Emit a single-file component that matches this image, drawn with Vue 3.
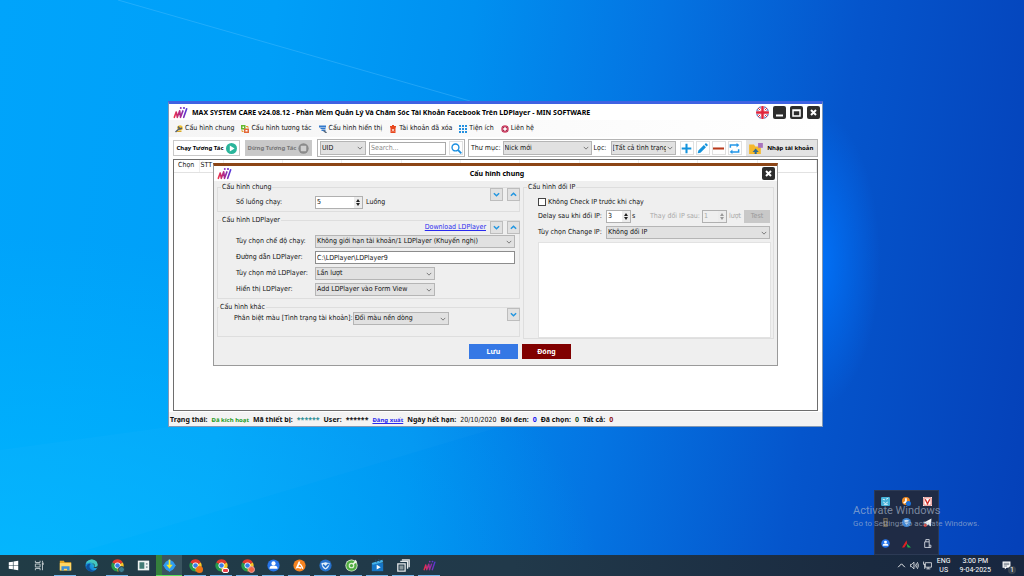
<script setup>
import { ref } from 'vue'

const menu = [
  { icon: 'wrench', text: 'Cấu hình chung' },
  { icon: 'swap', text: 'Cấu hình tương tác' },
  { icon: 'display', text: 'Cấu hình hiển thị' },
  { icon: 'trash', text: 'Tài khoản đã xóa' },
  { icon: 'grid', text: 'Tiện ích' },
  { icon: 'help', text: 'Liên hệ' }
]

const tools = [
  { icon: 'plus', label: 'Thêm' },
  { icon: 'pencil', label: 'Sửa' },
  { icon: 'minus', label: 'Xóa' },
  { icon: 'refresh', label: 'Tải lại' }
]

const apps = [
  { icon: 'windows', label: 'Start' },
  { icon: 'taskview', label: 'Task View' },
  { icon: 'folder', label: 'File Explorer', open: true },
  { icon: 'edge', label: 'Edge' },
  { icon: 'chrome', label: 'Chrome', open: true, badge: 'teal' },
  { icon: 'panel', label: 'Panel' },
  { icon: 'download', label: 'Downloader', open: true, busy: true },
  { icon: 'chrome', label: 'Chrome 2', open: true, badge: 'orange' },
  { icon: 'chrome', label: 'Chrome 3', open: true, badge: 'white' },
  { icon: 'chrome', label: 'Chrome 4', open: true, badge: 'red' },
  { icon: 'person', label: 'Contacts', open: true },
  { icon: 'rocket', label: 'Launcher', open: true },
  { icon: 'shield', label: 'Shield', open: true },
  { icon: 'coccoc', label: 'Browser', open: true },
  { icon: 'movies', label: 'Player', open: true },
  { icon: 'stack', label: 'Windows', open: true },
  { icon: 'logo', label: 'MIN', open: true }
]

const tray = ['t-face', 't-orange', 't-v', 't-dark', 't-shield', 't-send', 'person', 't-tri', 't-usb']

const keyword = ref('')
const threads = ref('5')
const path = ref('C:\\LDPlayer\\LDPlayer9')
const delay = ref('3')
const change = ref('1')
const skipCheck = ref(false)
const ipList = ref('')
</script>

<template>
  <main class="desktop">
    <svg class="defs" aria-hidden="true">
      <defs>
        <linearGradient id="min" gradientUnits="userSpaceOnUse" x1="2" y1="0" x2="26" y2="0">
          <stop offset="0" stop-color="#ee3048" /><stop offset=".5" stop-color="#a82a94" /><stop offset="1" stop-color="#5236dc" />
        </linearGradient>
        <linearGradient id="edgeg" x1="0" y1="1" x2="1" y2="0">
          <stop offset="0" stop-color="#0d5cb8" /><stop offset=".5" stop-color="#1b9de2" /><stop offset="1" stop-color="#55d66a" />
        </linearGradient>
      </defs>
      <symbol id="logo" viewBox="0 0 28 24">
        <path d="M2.500 21L6 11M8 21L12.500 9M14 21L18.500 9M20 21L25.500 5M6 11L8 20M12.500 9L14 20" fill="none" stroke="url(#min)" stroke-width="3" stroke-linecap="round" />
        <circle cx="14.500" cy="3.500" r="1.800" fill="#8e2fb8" /><circle cx="20.500" cy="3.500" r="2" fill="#6b34cc" />
      </symbol>
      <symbol id="wrench" viewBox="0 0 16 16"><circle cx="10" cy="6" r="5.500" fill="#f0c330" /><path d="M1 14L9 7M6 3L10 8L14 6" stroke="#55606c" stroke-width="3" fill="none" /><path d="M4 13h9" stroke="#d8a92c" stroke-width="2" /></symbol>
      <symbol id="swap" viewBox="0 0 16 16"><path d="M0 0h9v9H0z" fill="#63b82e" /><path d="M3 3h3v3H3z" fill="#fff" /><path d="M6 7h10v9H6z" fill="#e2683a" /><path d="M9 10h4v3H9z" fill="#fff" /><path d="M10 3h4v3M2 10v3h3" stroke="#e8a02c" stroke-width="2" fill="none" /></symbol>
      <symbol id="display" viewBox="0 0 16 16"><path d="M0 1h14v4H0zM3 6h10v2H3zM5 9h8v3H5z" fill="#3279cc" /><path d="M9 11l6 5" stroke="#58697c" stroke-width="3" /></symbol>
      <symbol id="trash" viewBox="0 0 16 16"><path d="M2 2h4V0h4v2h4v3H2zM3 4h10v12H3z" fill="#e8471e" /><path d="M6 8l4 5M10 8l-4 5" stroke="#fff" stroke-width="1.500" /></symbol>
      <symbol id="grid" viewBox="0 0 16 16"><path d="M0 0h4v4H0zM6 0h4v4H6zM12 0h4v4h-4zM0 6h4v4H0zM6 6h4v4H6zM12 6h4v4h-4zM0 12h4v4H0zM6 12h4v4H6zM12 12h4v4h-4z" fill="#2590df" /></symbol>
      <symbol id="help" viewBox="0 0 16 16"><circle cx="8" cy="8" r="5.500" fill="none" stroke="#d14668" stroke-width="4" /><path d="M3 3l3 3M13 3l-3 3M3 13l3-3M13 13l-3-3" stroke="#8d3150" stroke-width="2" /></symbol>
      <symbol id="play" viewBox="0 0 16 16"><circle cx="8" cy="8" r="8" fill="#2bb59b" /><path d="M5.500 3.500v9l7-4.500z" fill="#fff" /></symbol>
      <symbol id="stop" viewBox="0 0 16 16"><circle cx="8" cy="8" r="7.500" fill="#8b8b8b" /><rect x="4" y="4" width="8" height="8" rx="1" fill="#cfcfcf" /></symbol>
      <symbol id="search" viewBox="0 0 16 16"><circle cx="6.500" cy="6.500" r="5" fill="none" stroke="#1b8fe0" stroke-width="2" /><path d="M10 10l5 5" stroke="#1b8fe0" stroke-width="2.600" /></symbol>
      <symbol id="plus" viewBox="0 0 16 16"><path d="M8 1v14M1 8h14" stroke="#1493dc" stroke-width="3" /></symbol>
      <symbol id="minus" viewBox="0 0 16 16"><path d="M0 8h16" stroke="#b93a1c" stroke-width="3" /></symbol>
      <symbol id="pencil" viewBox="0 0 16 16"><path d="M1 15l1-4 8-8 3 3-8 8zM11 2l2-2 3 3-2 2z" fill="#1493dc" /></symbol>
      <symbol id="refresh" viewBox="0 0 16 16"><path d="M2 7V3h10M14 9v4H4" stroke="#2396e8" stroke-width="2.200" fill="none" /><path d="M11 0l4 3-4 3.500zM5 9.500L1 13l4 3z" fill="#2396e8" /></symbol>
      <symbol id="import" viewBox="0 0 20 16"><path d="M0 2h7l2 3h8v11H0z" fill="#f5b82a" /><path d="M13 0h7v7h-7z" fill="#a874bd" /><path d="M8 16v-3H5l4.500-5 4.500 5h-3v3z" fill="#2c6a94" /></symbol>
      <symbol id="down" viewBox="0 0 16 16"><path d="M2 5l6 6 6-6" stroke="#2396e0" stroke-width="3.400" fill="none" /></symbol>
      <symbol id="up" viewBox="0 0 16 16"><path d="M2 11l6-6 6 6" stroke="#2396e0" stroke-width="3.400" fill="none" /></symbol>
      <symbol id="chev" viewBox="0 0 16 16"><path d="M2 5l6 6 6-6" stroke="#666" stroke-width="2.200" fill="none" /></symbol>
      <symbol id="flag" viewBox="0 0 26 26">
        <clipPath id="round"><circle cx="13" cy="13" r="13" /></clipPath>
        <g clip-path="url(#round)"><path d="M0 0h26v26H0z" fill="#33459c" /><path d="M0 0l26 26M26 0L0 26" stroke="#fff" stroke-width="5" /><path d="M0 0l26 26M26 0L0 26" stroke="#e0243c" stroke-width="2" /><path d="M13 0v26M0 13h26" stroke="#fff" stroke-width="8" /><path d="M13 0v26M0 13h26" stroke="#e0243c" stroke-width="5" /></g>
      </symbol>
      <symbol id="windows" viewBox="-3 -3 22 22"><path d="M0 2.500l7-1v6H0zM8 1.300L16 0v7.500H8zM0 8.500h7v6l-7-1zM8 8.500h8V16l-8-1.300z" fill="#fff" /></symbol>
      <symbol id="taskview" viewBox="-3 -3 22 22"><path d="M1 0v3h8V0M1 16v-3h8v3M1 5.500h8v5H1zM13 0v3M13 7v9" stroke="#c3cccf" stroke-width="1.600" fill="none" /><path d="M12 3h3v4h-3z" fill="#c3cccf" /></symbol>
      <symbol id="folder" viewBox="0 0 16 16"><path d="M1 2h5l1 2h8v10H1z" fill="#e9a822" /><path d="M1 5h14v9H1z" fill="#ffd766" /><path d="M3 14V9h10v5h-3v-2H6v2z" fill="#3b8fd8" /></symbol>
      <symbol id="edge" viewBox="0 0 16 16"><circle cx="8" cy="8" r="7.500" fill="url(#edgeg)" /><path d="M7 6q-3 3 0 6.500 4 3 7.500 0-3 3.500-7 3-6-1-6-6 2-5 5.500-3.500z" fill="#0e529e" /><path d="M8 6.500q2-1 3.500.500 1 2-1 3.500 3 1.500 5-.500V8L12 5z" fill="#243b45" /><path d="M1 6Q3 1 8.500.600 15 1 15.500 7q0 3-4 3 1.500-2 0-4Q7 2 1 6z" fill="#44c8c0" /></symbol>
      <symbol id="chrome" viewBox="0 0 16 16"><path d="M8 8L1.500 4.200A7.500 7.500 0 0 1 14.500 4.200z" fill="#e33b2e" /><path d="M8 8L1.500 4.200A7.500 7.500 0 0 0 8 15.500z" fill="#269a4b" /><path d="M8 8l6.500-3.800A7.500 7.500 0 0 1 8 15.500z" fill="#f9c624" /><circle cx="8" cy="8" r="3.700" fill="#fff" /><circle cx="8" cy="8" r="2.800" fill="#3a7de8" /></symbol>
      <symbol id="panel" viewBox="0 0 16 16"><path d="M1 2h14v12H1z" fill="#eef2f2" /><path d="M3 4h6v8H3z" fill="#427a75" /><path d="M11 5h2v2h-2zM11 9h2v2h-2z" fill="#8a9da4" /></symbol>
      <symbol id="download" viewBox="0 0 16 16"><path d="M8 0l8 8-8 8-8-8z" fill="#2e9cf2" /><circle cx="8" cy="8" r="6.500" fill="#2e9cf2" /><path d="M7 1h2v6h3l-4 5-4-5h3z" fill="#f6e82e" /></symbol>
      <symbol id="person" viewBox="0 0 16 16"><circle cx="8" cy="8" r="7.500" fill="#2775ea" /><circle cx="8" cy="5.500" r="2.600" fill="#fff" /><path d="M3 12q0-4 5-4t5 4z" fill="#fff" /></symbol>
      <symbol id="rocket" viewBox="0 0 16 16"><circle cx="8" cy="8" r="7.500" fill="#f58320" /><path d="M3 12L7 3h2l-3 8z" fill="#fff" /><path d="M7 6q3 0 5 6M5 10l5 1" stroke="#fff" stroke-width="1.800" fill="none" /></symbol>
      <symbol id="shield" viewBox="0 0 16 16"><circle cx="8" cy="8" r="7.500" fill="#2671cc" /><path d="M3 5q3 0 5-1 2 1 5 1 0 6-5 8-5-2-5-8z" fill="#e3f0fb" /><path d="M5 7l3 3 4-4" stroke="#2671cc" stroke-width="2" fill="none" /></symbol>
      <symbol id="coccoc" viewBox="0 0 16 16"><circle cx="8" cy="8" r="7.500" fill="#dff0d6" /><circle cx="8" cy="8" r="5" fill="none" stroke="#50ad41" stroke-width="3" /><path d="M8 8l5-7 2 3z" fill="#eef8e9" /><circle cx="8" cy="8" r="2" fill="#50ad41" /></symbol>
      <symbol id="movies" viewBox="0 0 16 16"><path d="M1 5h14v10H1z" fill="#1676c6" /><path d="M1 5l13-4 1 3-13 3z" fill="#46b4ea" /><path d="M5 1l2 3M9 0l2 3" stroke="#1e4d75" stroke-width="1.500" /><path d="M7 7v6l5-3z" fill="#fff" /></symbol>
      <symbol id="stack" viewBox="0 0 16 16"><path d="M6 1h9v9M4 3h9v9M1 6h9v9H1z" stroke="#e5e8e9" stroke-width="1.600" fill="none" /><path d="M3 8h5v5H3z" fill="#8a979c" /></symbol>
      <symbol id="t-face" viewBox="0 0 16 16"><rect width="16" height="16" rx="2" fill="#45b1d8" /><path d="M3 4l4 1M9 4l4-2M4 9q4 5 8 0M5 13h7" stroke="#e6f6fc" stroke-width="1.600" fill="none" /></symbol>
      <symbol id="t-orange" viewBox="0 0 16 16"><circle cx="7" cy="7" r="7" fill="#ef8a22" /><path d="M7 2v6l-4 3" stroke="#fff" stroke-width="3" fill="none" /><circle cx="11.500" cy="11.500" r="4.500" fill="#1d72d8" /></symbol>
      <symbol id="t-v" viewBox="0 0 16 16"><path d="M0 0h16v16H0z" fill="#fff" /><path d="M1.500 1.500h13v13h-13z" stroke="#d9625e" stroke-width="1.500" fill="none" /><path d="M4 4l4 8 4-8" stroke="#d02b28" stroke-width="2.500" fill="none" /></symbol>
      <symbol id="t-dark" viewBox="0 0 16 16"><path d="M4 0h8v16H4z" fill="#6f6658" /><path d="M6 2h4v3H6zM6 7h4v3H6z" fill="#24292f" /></symbol>
      <symbol id="t-shield" viewBox="0 0 16 16"><circle cx="8" cy="8" r="8" fill="#3e86d4" /><path d="M4 4l4-1 4 1q0 6-4 8-4-2-4-8z" fill="#c8dcf0" /><path d="M6 7l2 2 3-3" stroke="#2367b4" stroke-width="1.500" fill="none" /></symbol>
      <symbol id="t-send" viewBox="0 0 16 16"><path d="M0 9L15 1l-1 14-5-4-2 3-1-4z" fill="#f2f4f6" /><circle cx="4" cy="13" r="3" fill="#d8372f" /></symbol>
      <symbol id="t-tri" viewBox="0 0 16 16"><path d="M0 15L8 2l1 6-5 7z" fill="#e01f22" /><path d="M8 8l8 7h-6z" fill="#22b548" /></symbol>
      <symbol id="t-usb" viewBox="0 0 16 16"><path d="M5 5V1h6v4M3 5h8v10H3zM11 11h3v4h-4" stroke="#dbe0e8" stroke-width="1.500" fill="none" /></symbol>
      <symbol id="caret" viewBox="0 0 16 16"><path d="M2 11l6-6 6 6" stroke="#fff" stroke-width="1.600" fill="none" /></symbol>
      <symbol id="sound" viewBox="0 0 16 16"><path d="M1 6h2l4-4v12L3 10H1zM9 6q1.500 2 0 4M11 4q3 4 0 8M13 2q4.500 6 0 12" stroke="#fff" stroke-width="1.300" fill="none" /></symbol>
      <symbol id="net" viewBox="0 0 16 16"><path d="M4 3h11v8H4zM9 11v3M6 14h7M1 1v5h3M3 6v8" stroke="#fff" stroke-width="1.300" fill="none" /></symbol>
      <symbol id="note" viewBox="0 0 16 16"><path d="M1 1h14v11H8l-3 3v-3H1z" fill="#fff" /><path d="M3 4h10M3 6.500h10M3 9h6" stroke="#1d2d42" stroke-width="1" /></symbol>
    </svg>

    <svg class="beams" viewBox="0 0 1024 576" preserveAspectRatio="none" aria-hidden="true">
      <path d="M118 0L470 101" stroke="#5cc4ff" stroke-width="1" opacity=".35" />
      <path d="M0 450L168 427 500 427 0 576z" fill="#fff" opacity=".02" />
    </svg>

    <section class="window">
      <header class="titlebar">
        <svg class="brand"><use href="#logo" /></svg>
        <h1>MAX SYSTEM CARE v24.08.12 - Phần Mềm Quản Lý Và Chăm Sóc Tài Khoản Facebook Trên LDPlayer - MIN SOFTWARE</h1>
        <button class="flag" aria-label="English"><svg><use href="#flag" /></svg></button>
        <button class="sys" aria-label="Minimize"><svg viewBox="0 0 13 13"><path d="M3 9.500h7" stroke="#fff" stroke-width="2" /></svg></button>
        <button class="sys" aria-label="Maximize"><svg viewBox="0 0 13 13"><path d="M3 4h7v6H3zM3 4.500h7" stroke="#fff" stroke-width="1.500" fill="none" /></svg></button>
        <button class="sys" aria-label="Close"><svg viewBox="0 0 13 13"><path d="M4 4l5 5M9 4l-5 5" stroke="#fff" stroke-width="2" /></svg></button>
      </header>

      <nav class="menu">
        <button v-for="m in menu" :key="m.text"><svg><use :href="'#' + m.icon" /></svg>{{ m.text }}</button>
      </nav>

      <div class="toolbar">
        <button class="run">Chạy Tương Tác<svg><use href="#play" /></svg></button>
        <button class="run off" disabled>Dừng Tương Tác<svg><use href="#stop" /></svg></button>
        <div class="box">
          <span class="pick uid"><select aria-label="Loại"><option>UID</option></select><svg><use href="#chev" /></svg></span>
          <input v-model="keyword" class="find" type="text" placeholder="Search..." aria-label="Search" />
          <button class="icon" aria-label="Tìm"><svg><use href="#search" /></svg></button>
        </div>
        <div class="box wide">
          <label for="folder-name">Thư mục:</label>
          <span class="pick folder"><select id="folder-name"><option>Nick mới</option></select><svg><use href="#chev" /></svg></span>
          <label for="filter">Lọc:</label>
          <span class="pick filter"><select id="filter"><option>[Tất cả tình trạng]</option></select><svg><use href="#chev" /></svg></span>
          <button v-for="t in tools" :key="t.icon" class="icon" :aria-label="t.label"><svg><use :href="'#' + t.icon" /></svg></button>
          <button class="import"><svg><use href="#import" /></svg>Nhập tài khoản</button>
        </div>
      </div>

      <div class="sheet">
        <table><thead><tr><th>Chọn</th><th>STT</th><th v-for="n in 10" :key="n"></th></tr></thead></table>
      </div>

      <footer class="status">
        <b>Trạng thái:</b><b class="small green">Đã kích hoạt</b>
        <b>Mã thiết bị:</b><b class="teal">******</b>
        <b>User:</b><b>******</b>
        <a href="#" class="small">Đăng xuất</a>
        <b>Ngày hết hạn:</b><span>20/10/2020</span>
        <b>Bôi đen:</b><b class="blue">0</b>
        <b>Đã chọn:</b><b class="dark">0</b>
        <b>Tất cả:</b><b class="maroon">0</b>
      </footer>
    </section>

    <section class="dialog" role="dialog" aria-labelledby="dlg-title">
      <header>
        <svg class="brand"><use href="#logo" /></svg>
        <h2 id="dlg-title">Cấu hình chung</h2>
        <button class="sys" aria-label="Đóng cửa sổ"><svg viewBox="0 0 13 13"><path d="M4 4l5 5M9 4l-5 5" stroke="#fff" stroke-width="2" /></svg></button>
      </header>

      <div class="body">
        <div class="left">
          <fieldset class="general">
            <legend>Cấu hình chung</legend>
            <div class="corner">
              <button class="fold" aria-label="Mở"><svg><use href="#down" /></svg></button>
              <button class="fold" aria-label="Thu"><svg><use href="#up" /></svg></button>
            </div>
            <div class="row">
              <label for="threads">Số luồng chạy:</label>
              <span class="spin"><input id="threads" v-model="threads" type="text" /><i></i></span>
              <span>Luồng</span>
            </div>
          </fieldset>

          <fieldset class="ld">
            <legend>Cấu hình LDPlayer</legend>
            <div class="corner">
              <a href="#">Download LDPlayer</a>
              <button class="fold" aria-label="Mở LDPlayer"><svg><use href="#down" /></svg></button>
              <button class="fold" aria-label="Thu LDPlayer"><svg><use href="#up" /></svg></button>
            </div>
            <div class="row">
              <label for="mode">Tùy chọn chế độ chạy:</label>
              <span class="pick full"><select id="mode"><option>Không giới hạn tài khoản/1 LDPlayer (Khuyến nghị)</option></select><svg><use href="#chev" /></svg></span>
            </div>
            <div class="row">
              <label for="path">Đường dẫn LDPlayer:</label>
              <input id="path" v-model="path" class="text" type="text" />
            </div>
            <div class="row">
              <label for="open">Tùy chọn mở LDPlayer:</label>
              <span class="pick mid"><select id="open"><option>Lần lượt</option></select><svg><use href="#chev" /></svg></span>
            </div>
            <div class="row">
              <label for="view">Hiển thị LDPlayer:</label>
              <span class="pick mid"><select id="view"><option>Add LDPlayer vào Form View</option></select><svg><use href="#chev" /></svg></span>
            </div>
          </fieldset>

          <fieldset class="other">
            <legend>Cấu hình khác</legend>
            <div class="corner">
              <button class="fold" aria-label="Mở cấu hình khác"><svg><use href="#down" /></svg></button>
            </div>
            <div class="row">
              <label for="color">Phân biệt màu [Tình trạng tài khoản]:</label>
              <span class="pick color"><select id="color"><option>Đổi màu nền dòng</option></select><svg><use href="#chev" /></svg></span>
            </div>
          </fieldset>
        </div>

        <fieldset class="ip">
          <legend>Cấu hình đổi IP</legend>
          <label class="check"><input v-model="skipCheck" type="checkbox" />Không Check IP trước khi chạy</label>
          <div class="row">
            <label for="delay">Delay sau khi đổi IP:</label>
            <span class="spin short"><input id="delay" v-model="delay" type="text" /><i></i></span>
            <span>s</span>
            <label for="change" class="mute push">Thay đổi IP sau:</label>
            <span class="spin short mute"><input id="change" v-model="change" type="text" disabled /><i></i></span>
            <span class="mute">lượt</span>
            <button class="test" disabled>Test</button>
          </div>
          <div class="row">
            <label for="ip-mode">Tùy chọn Change IP:</label>
            <span class="pick full"><select id="ip-mode"><option>Không đổi IP</option></select><svg><use href="#chev" /></svg></span>
          </div>
          <textarea v-model="ipList" aria-label="Cấu hình đổi IP"></textarea>
        </fieldset>
      </div>

      <div class="actions">
        <button class="save">Lưu</button>
        <button class="close">Đóng</button>
      </div>
    </section>

    <aside class="tray">
      <button v-for="t in tray" :key="t" :aria-label="t"><svg><use :href="'#' + t" /></svg></button>
    </aside>

    <div class="activate">
      <strong>Activate Windows</strong>
      <span>Go to Settings to activate Windows.</span>
    </div>

    <footer class="taskbar">
      <button v-for="a in apps" :key="a.label" class="app" :class="{ open: a.open, busy: a.busy }" :aria-label="a.label">
        <svg><use :href="'#' + a.icon" /></svg><i v-if="a.badge" :class="a.badge"></i>
      </button>
      <div class="system">
        <svg><use href="#caret" /></svg><svg><use href="#sound" /></svg><svg><use href="#net" /></svg>
        <span class="lang">ENG<br />US</span>
        <time>3:00 PM<br />9-04-2025</time>
        <span class="notes"><svg><use href="#note" /></svg><em>1</em></span>
      </div>
    </footer>
  </main>
</template>

<style>
body { background: #0a74e0; }
</style>

<style scoped>
* { box-sizing: border-box; }
.desktop {
  position: relative;
  height: 100vh;
  overflow: hidden;
  display: flex;
  flex-direction: column;
  font: 7px/9px "DejaVu Sans Condensed", "Noto Sans", sans-serif;
  color: #111;
  background:
    radial-gradient(ellipse 65px 150px at 815px 260px, rgba(0, 118, 255, .9), transparent),
    radial-gradient(ellipse 600px 340px at 0 100%, rgba(0, 190, 255, .7), transparent),
    linear-gradient(98deg, #00a4fb 0%, #009ff8 25%, #0090f0 43%, #0474e2 60%, #0555cc 78%, #0540b8 100%);
}
.defs { position: absolute; width: 0; height: 0; }
.beams { position: absolute; inset: 0; width: 100%; height: 100%; }
svg { display: block; flex: none; }
button, input, select, textarea { font: inherit; color: inherit; margin: 0; padding: 0; border: 0; border-radius: 0; outline: 0; }
button { display: flex; align-items: center; justify-content: center; background: none; white-space: nowrap; }
label, span { white-space: nowrap; }
b, h1, h2, .run, .import, .save, .close { font-family: "Noto Sans", sans-serif; font-weight: 700; }
a { color: #2a2aee; }

.window {
  position: absolute;
  inset: 101px 201px 149px 168px;
  display: flex;
  flex-direction: column;
  background: #fff;
  border: 1px solid #8298b4;
  border-top: 3px solid #3f62e2;
}
.titlebar { display: flex; align-items: center; height: 16px; padding: 0 2px 0 4px; gap: 4px; }
h1 { margin: 0 auto 0 0; font-size: 7px; color: #000; white-space: nowrap; }
.brand { width: 15px; height: 13px; }
.flag svg { width: 13px; height: 13px; }
.sys { width: 13px; height: 13px; background: #2d2d2d; border-radius: 2px; }
.sys svg { width: 13px; height: 13px; }
.menu { display: flex; align-items: center; gap: 7px; height: 17px; padding-left: 6px; background: linear-gradient(90deg, #f5f5f5, #fff); }
.menu button { gap: 2px; }
.menu svg { width: 8px; height: 8px; }
.toolbar { display: flex; gap: 5px; height: 22px; padding: 2px 4px; align-items: center; }
.run { flex: none; width: 67px; height: 16px; gap: 2px; border: 1px solid #c9c9c9; color: #000; font-size: 6px; }
.run svg { width: 11px; height: 11px; }
.run.off { background: #c8c8c8; color: #777; }
.box { display: flex; align-items: center; height: 18px; padding: 0 1px 0 2px; gap: 3px; border: 1px solid #b4b4b4; }
.box.wide { flex: 1; min-width: 0; gap: 2px; margin-left: -2px; padding: 0 0 0 2px; }
.pick { position: relative; display: block; height: 13px; background: #e1e1e1; border: 1px solid #b5b5b5; }
.pick select { display: block; width: 100%; height: 100%; padding: 0 9px 0 1px; appearance: none; background: none; }
.pick svg { position: absolute; right: 2px; top: 3px; width: 6px; height: 6px; pointer-events: none; }
.box .pick { height: 14px; flex: none; }
.uid { width: 46px; }
.folder { width: 89px; }
.filter { width: 65px; margin: 0 2px; }
.find { width: 77px; height: 13px; border: 1px solid #a9a9a9; padding: 0 1px; }
.find::placeholder { color: #888; opacity: 1; }
.icon { flex: none; width: 14px; height: 14px; border: 1px solid #e0e0e0; background: #fff; }
.icon svg { width: 11px; height: 11px; }
.import { flex: 1; min-width: 0; height: 16px; margin-left: 2px; gap: 4px; background: #e3e3e3; color: #000; font-size: 6px; }
.import svg { width: 14px; height: 11px; }
.sheet { flex: 1; margin: 0 4px; border: 1px solid #6e6e6e; }
table { width: 100%; border-collapse: collapse; table-layout: fixed; }
th { height: 12px; padding: 0 4px; font-weight: 400; text-align: left; border-right: 1px solid #eee; border-bottom: 1px solid #e2e2e2; }
th:first-child { width: 25px; }
th:nth-child(2) { width: 24px; padding: 0 1px; }
.status { display: flex; align-items: baseline; gap: 4px; height: 14px; margin-top: 1px; padding: 3px 0 0 1px; background: #f3f3f3; white-space: nowrap; }
.small { font-size: 6px; font-family: "Noto Sans", sans-serif; font-weight: 700; }
.green { color: #1b9a1b; }
.teal { color: #2f8e95; }
.blue { color: #1414f0; }
.dark { color: #124a1e; }
.maroon { color: #8c1420; }

.dialog {
  position: absolute;
  left: 213px;
  right: 246px;
  top: 163px;
  background: #efefef;
  border: 1px solid #9a9a9a;
  border-top: 3px solid #8c4516;
}
.dialog header { display: flex; align-items: center; height: 15px; padding: 0 2px 0 3px; background: #fff; }
h2 { flex: 1; margin: 0 17px 0 0; padding-left: 13px; font-size: 7px; text-align: center; color: #000; }
.dialog h2 { margin-right: 0; padding-left: 0; }
.body { display: grid; grid-template-columns: 303px 1fr; gap: 3px; padding: 2px 3px 0; }
.left { display: flex; flex-direction: column; gap: 4px; }
fieldset { position: relative; min-width: 0; margin: 0; padding: 0 4px 1px 18px; border: 1px solid #dedede; }
legend { margin-left: -15px; padding: 0 1px; line-height: 9px; }
.row { display: flex; align-items: center; height: 13px; margin-bottom: 3px; }
.left .row label { width: 79px; }
.general .row { margin-top: 4px; margin-bottom: 1px; }
.corner { position: absolute; top: -4px; right: -1px; display: flex; align-items: center; gap: 4px; }
.fold { width: 13px; height: 13px; background: #e1e1e1; border: 1px solid #bdbdbd; }
.fold svg { width: 7px; height: 7px; }
.ld { padding-top: 10px; padding-bottom: 0; }
.ld .row:last-child { margin-bottom: 2px; }
.left .other { padding-left: 16px; padding-bottom: 9px; }
.left .other .row { margin-bottom: 2px; }
.left .other .row label { width: auto; }
.full { flex: 1; }
.mid { width: 120px; }
.color { width: 96px; }
.text { flex: 1; height: 13px; padding: 0 1px; border: 1px solid #8c8c8c; background: #fff; }
.spin { display: flex; width: 48px; height: 13px; margin-right: 3px; border: 1px solid #b0b0b0; background: #fff; }
.spin input { flex: 1; min-width: 0; padding: 0 1px; background: none; }
.spin i { display: flex; flex-direction: column; align-items: center; justify-content: space-evenly; width: 8px; background: #ececec; }
.spin i::before, .spin i::after { content: ""; border: 2px solid transparent; border-top: 0; border-bottom: 3px solid #222; }
.spin i::after { transform: rotate(180deg); }
.short { width: 25px; margin-right: 1px; }
.mute { color: #a8a8a8; }
.spin.mute { background: #efefef; margin-left: 2px; margin-right: 2px; }
.spin.mute i::before, .spin.mute i::after { border-bottom-color: #999; }
.ip { display: flex; flex-direction: column; padding: 0 2px 0 14px; }
.ip legend { margin-left: -11px; }
.ip .row { padding-right: 1px; }
.ip .row > label:first-child { width: 68px; }
.check { display: flex; align-items: center; gap: 2px; height: 12px; margin: 4px 0 2px; }
.check input { width: 8px; height: 8px; appearance: none; background: #fff; border: 1px solid #444; }
.push { margin-left: auto; }
.test { width: 26px; height: 13px; margin-left: 3px; background: #c8c8c8; color: #999; }
textarea { flex: 1; min-height: 96px; resize: none; background: #fff; border: 1px solid #e2e2e2; }
.actions { display: flex; justify-content: center; gap: 4px; padding: 5px 0 6px 49px; }
.actions button { width: 49px; height: 15px; color: #fff; }
.save { background: #3578e5; }
.close { background: #800000; }

.tray {
  position: absolute;
  right: 85px;
  bottom: 21px;
  display: grid;
  grid-template-columns: repeat(3, 21px);
  grid-template-rows: repeat(3, 21px);
  border: 1px solid #2c3a55;
  background: #1f2b45;
}
.tray svg { width: 9px; height: 9px; }
.activate { position: absolute; left: calc(100% - 171px); bottom: 47px; display: flex; flex-direction: column; font-family: Roboto, sans-serif; color: rgba(175, 190, 210, .65); }
.activate strong { font-size: 11px; line-height: 14px; font-weight: 400; }
.activate span { font-size: 8px; line-height: 11px; }
.taskbar { position: relative; display: flex; height: 21px; margin-top: auto; background: linear-gradient(90deg, #213c46, #21394a 50%, #1a2a40 85%, #182740); }
.app { position: relative; width: 26px; height: 21px; }
.app svg { width: 13px; height: 13px; }
.app.open::after { content: ""; position: absolute; left: 2px; right: 2px; bottom: 0; height: 1px; background: #76b9ed; }
.app.busy { background: linear-gradient(90deg, #35803c 25%, #3a5560 25%); }
.app.busy::after { left: 0; right: 0; background: #5be05b; }
.app i { position: absolute; right: 5px; bottom: 3px; width: 7px; height: 7px; border-radius: 50%; }
.app .teal { background: #3b7f92; border: 1px solid #243b45; }
.app .orange { background: #ee7417; }
.app .white { height: 5px; background: #e8404a; border: 1px solid #fff; border-radius: 2px; }
.app .red { background: #f06848; border: 1px solid #e8a0a0; }
.system { display: flex; align-items: center; gap: 4px; margin-left: auto; padding-right: 13px; color: #fff; font: 7px/9px Roboto, sans-serif; text-align: center; }
.system svg { width: 9px; height: 9px; }
.lang { margin-left: 1px; }
.system time { margin: 0 7px 0 5px; white-space: nowrap; }
.notes { position: relative; }
.notes em { position: absolute; right: -5px; bottom: -4px; width: 8px; height: 8px; border-radius: 50%; background: #3a4450; font: 7px/8px Roboto, sans-serif; }
</style>
